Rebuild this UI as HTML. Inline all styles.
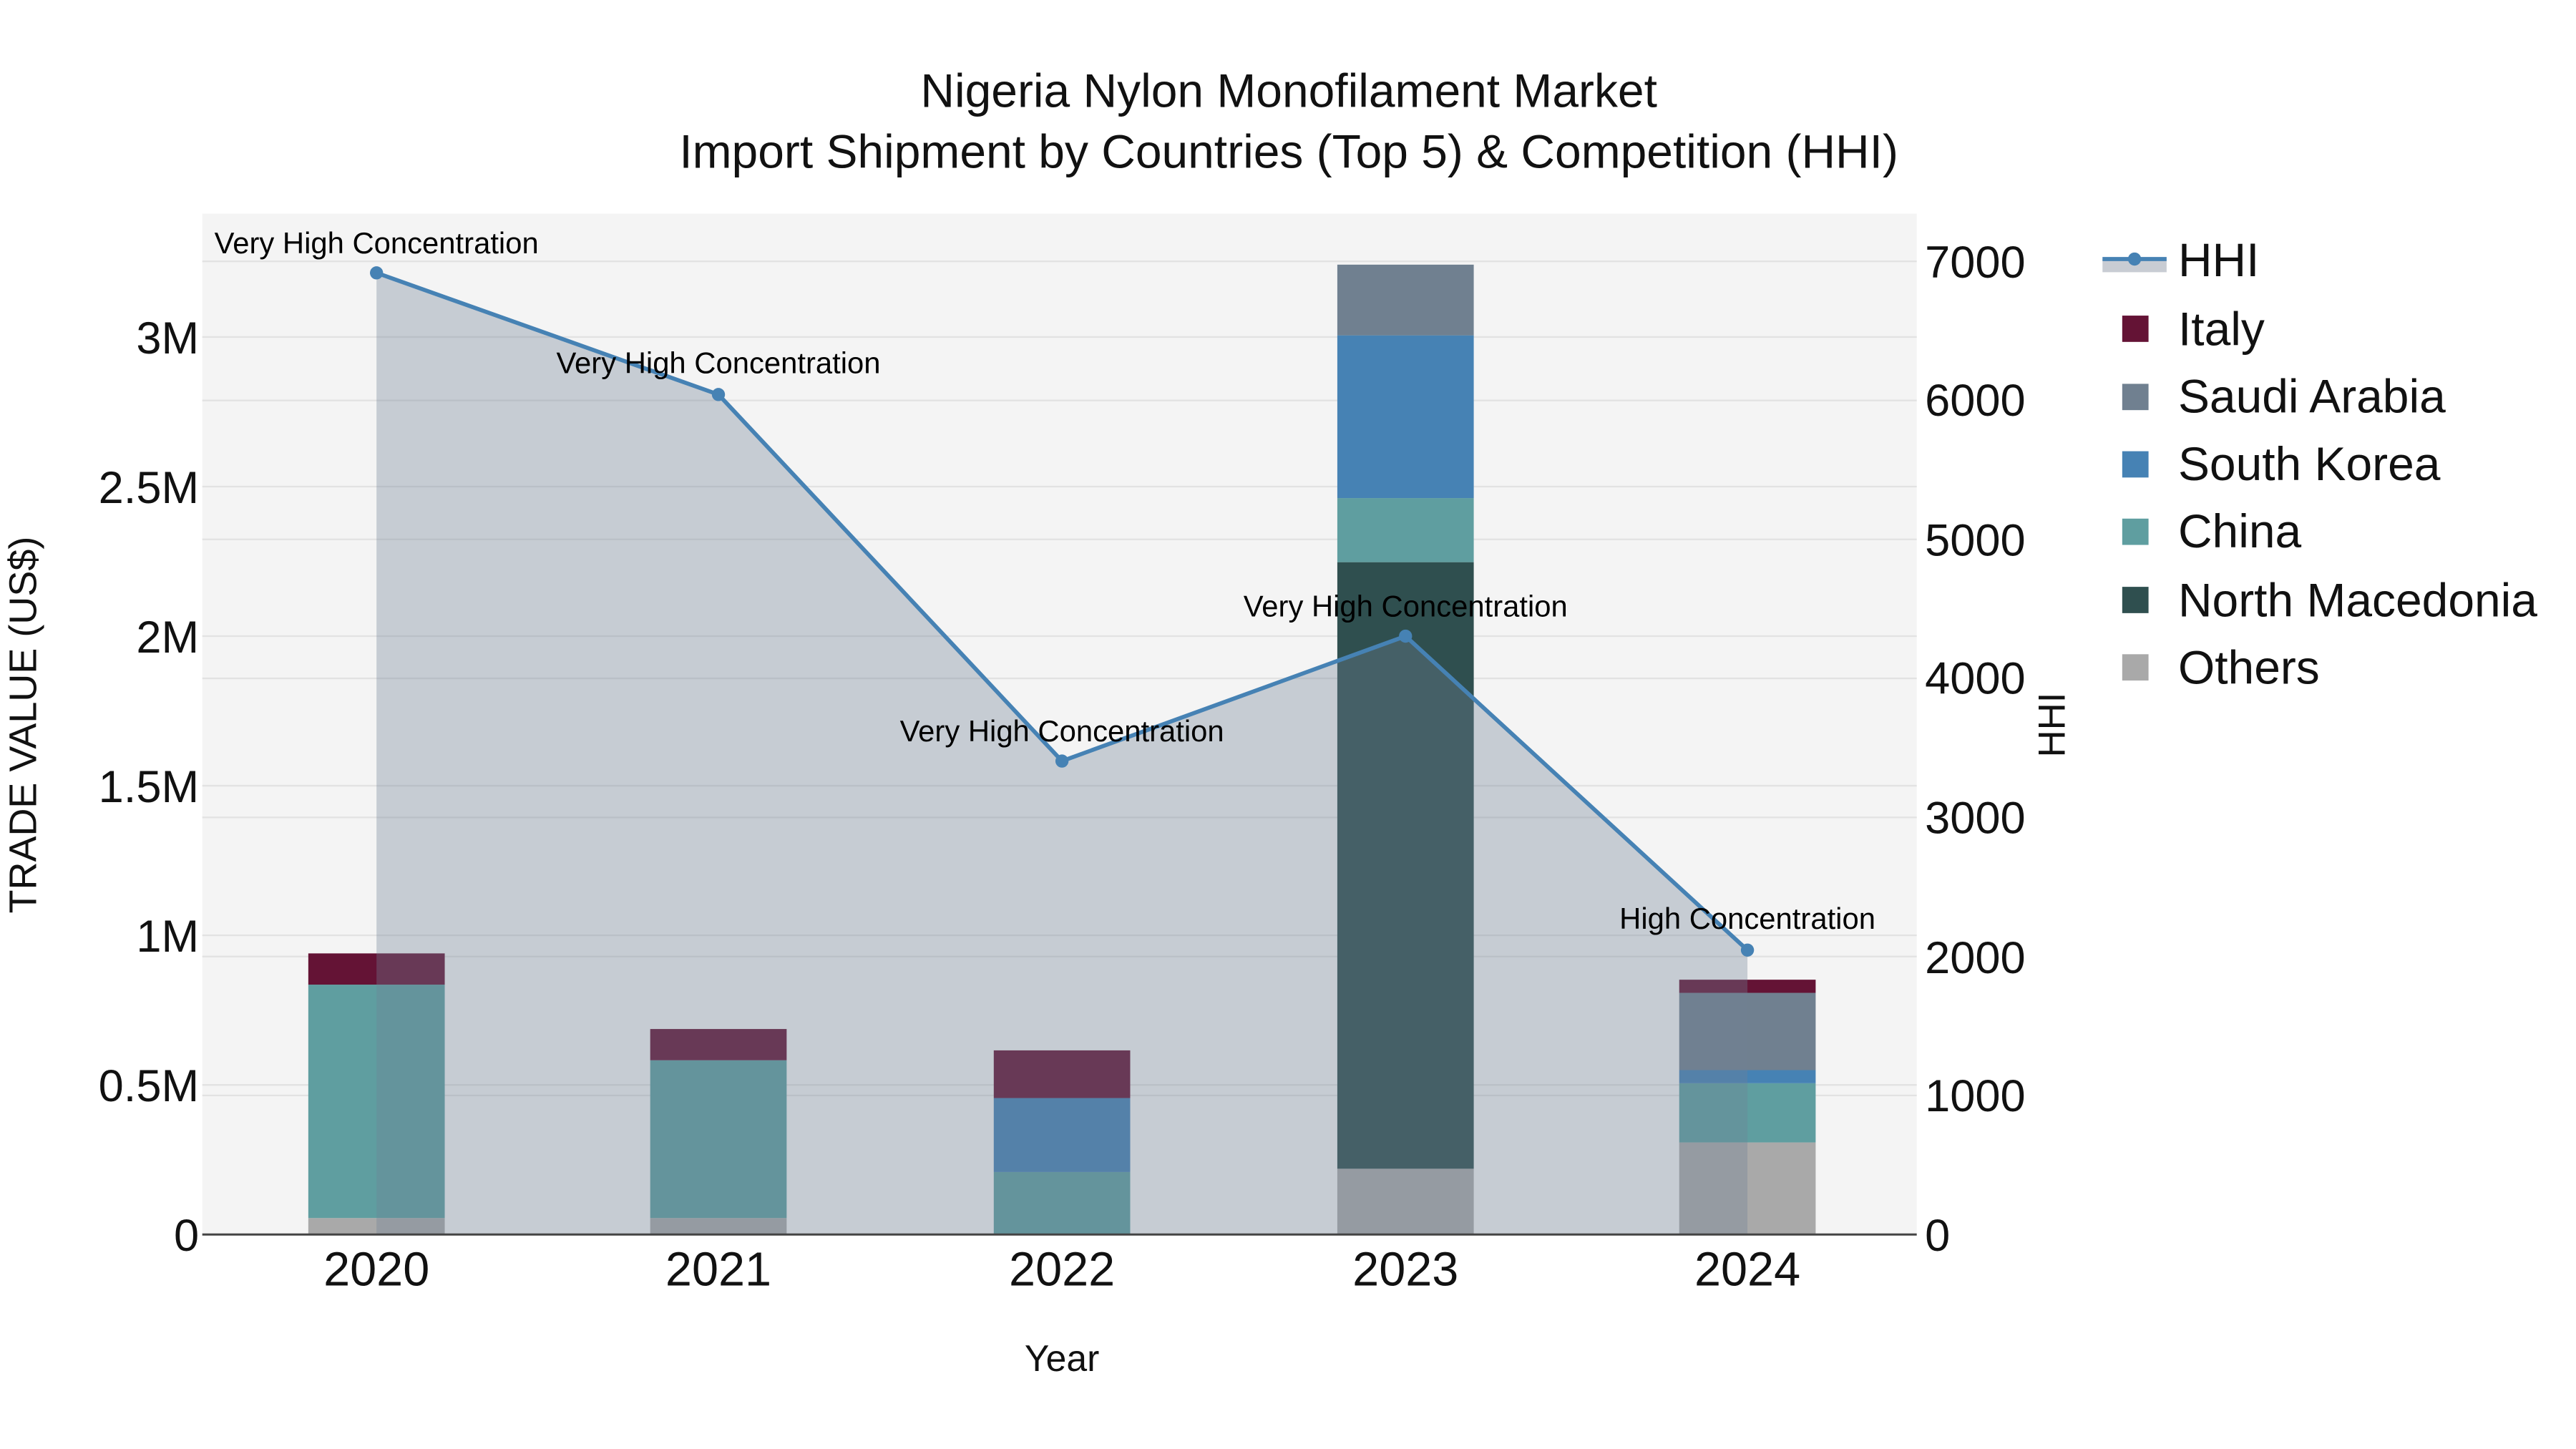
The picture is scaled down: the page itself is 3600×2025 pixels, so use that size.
<!DOCTYPE html>
<html><head><meta charset="utf-8"><style>html,body{margin:0;padding:0;background:#fff;}svg{display:block;}</style></head>
<body>
<svg width="3600" height="2025" viewBox="0 0 1567 881.5" xmlns="http://www.w3.org/2000/svg" font-family="Liberation Sans, Arial, sans-serif">
<rect x="0" y="0" width="1567" height="881.5" fill="#fff"/>
<rect x="123" y="130" width="1043" height="621" fill="#f4f4f4"/>
<g stroke="#e2e2e2" stroke-width="1">
<line x1="123" x2="1166" y1="660" y2="660"/><line x1="123" x2="1166" y1="569" y2="569"/><line x1="123" x2="1166" y1="478" y2="478"/><line x1="123" x2="1166" y1="387" y2="387"/><line x1="123" x2="1166" y1="296" y2="296"/><line x1="123" x2="1166" y1="205" y2="205"/>
<line x1="123" x2="1166" y1="666.4" y2="666.4"/><line x1="123" x2="1166" y1="581.9" y2="581.9"/><line x1="123" x2="1166" y1="497.3" y2="497.3"/><line x1="123" x2="1166" y1="412.7" y2="412.7"/><line x1="123" x2="1166" y1="328.1" y2="328.1"/><line x1="123" x2="1166" y1="243.6" y2="243.6"/><line x1="123" x2="1166" y1="159" y2="159"/>
</g>
<g>
<rect x="187.5" y="741" width="83" height="10" fill="#a9a9a9"/>
<rect x="187.5" y="599" width="83" height="142" fill="#5f9ea0"/>
<rect x="187.5" y="580" width="83" height="19" fill="#641335"/>
<rect x="395.5" y="741" width="83" height="10" fill="#a9a9a9"/>
<rect x="395.5" y="645" width="83" height="96" fill="#5f9ea0"/>
<rect x="395.5" y="626" width="83" height="19" fill="#641335"/>
<rect x="604.5" y="713" width="83" height="38" fill="#5f9ea0"/>
<rect x="604.5" y="668" width="83" height="45" fill="#4682b4"/>
<rect x="604.5" y="639" width="83" height="29" fill="#641335"/>
<rect x="813.5" y="711" width="83" height="40" fill="#a9a9a9"/>
<rect x="813.5" y="342" width="83" height="369" fill="#2f4f4f"/>
<rect x="813.5" y="303" width="83" height="39" fill="#5f9ea0"/>
<rect x="813.5" y="204" width="83" height="99" fill="#4682b4"/>
<rect x="813.5" y="161" width="83" height="43" fill="#708090"/>
<rect x="1021.5" y="695" width="83" height="56" fill="#a9a9a9"/>
<rect x="1021.5" y="659" width="83" height="36" fill="#5f9ea0"/>
<rect x="1021.5" y="651" width="83" height="8" fill="#4682b4"/>
<rect x="1021.5" y="604" width="83" height="47" fill="#708090"/>
<rect x="1021.5" y="596" width="83" height="8" fill="#641335"/>
</g>
<polygon points="229,166 437,240 646,463 855,387 1063,578 1063,751 229,751" fill="rgba(112,128,150,0.35)"/>
<line x1="123" x2="1166" y1="751" y2="751" stroke="#444" stroke-width="1.3"/>
<polyline points="229,166 437,240 646,463 855,387 1063,578" fill="none" stroke="#4682b4" stroke-width="2.5"/>
<g fill="#4682b4"><circle cx="229" cy="166" r="4"/><circle cx="437" cy="240" r="4"/><circle cx="646" cy="463" r="4"/><circle cx="855" cy="387" r="4"/><circle cx="1063" cy="578" r="4"/></g>
<g font-size="18.2" fill="#000" text-anchor="middle">
<text x="229" y="154">Very High Concentration</text>
<text x="437" y="227">Very High Concentration</text>
<text x="646" y="451">Very High Concentration</text>
<text x="855" y="375">Very High Concentration</text>
<text x="1063" y="565">High Concentration</text>
</g>
<g font-size="28.7" fill="#111" text-anchor="middle">
<text x="784" y="65">Nigeria Nylon Monofilament Market</text>
<text x="784" y="102">Import Shipment by Countries (Top 5) &amp; Competition (HHI)</text>
</g>
<g font-size="27.5" fill="#111" text-anchor="end">
<text x="121" y="761">0</text><text x="121" y="670">0.5M</text><text x="121" y="579">1M</text><text x="121" y="488">1.5M</text><text x="121" y="397">2M</text><text x="121" y="306">2.5M</text><text x="121" y="215">3M</text>
</g>
<g font-size="27.5" fill="#111">
<text x="1171" y="761">0</text><text x="1171" y="676">1000</text><text x="1171" y="592">2000</text><text x="1171" y="507">3000</text><text x="1171" y="422">4000</text><text x="1171" y="338">5000</text><text x="1171" y="253">6000</text><text x="1171" y="169">7000</text>
</g>
<g font-size="29" fill="#111" text-anchor="middle">
<text x="229" y="782">2020</text><text x="437" y="782">2021</text><text x="646" y="782">2022</text><text x="855" y="782">2023</text><text x="1063" y="782">2024</text>
</g>
<text x="646" y="834" font-size="22.5" fill="#111" text-anchor="middle">Year</text>
<text transform="translate(22,441) rotate(-90)" font-size="23.5" fill="#111" text-anchor="middle">TRADE VALUE (US$)</text>
<text transform="translate(1256,441) rotate(-90)" font-size="23" fill="#111" text-anchor="middle">HHI</text>
<rect x="1279" y="157.6" width="39" height="8" fill="#c8ccd3"/>
<line x1="1279" x2="1318" y1="157.6" y2="157.6" stroke="#4682b4" stroke-width="2.5"/>
<circle cx="1298.5" cy="157.6" r="4" fill="#4682b4"/>
<rect x="1291" y="192" width="16" height="16" fill="#641335"/>
<rect x="1291" y="233.5" width="16" height="16" fill="#708090"/>
<rect x="1291" y="274.5" width="16" height="16" fill="#4682b4"/>
<rect x="1291" y="315.5" width="16" height="16" fill="#5f9ea0"/>
<rect x="1291" y="357" width="16" height="16" fill="#2f4f4f"/>
<rect x="1291" y="398" width="16" height="16" fill="#a9a9a9"/>
<g font-size="28.7" fill="#111">
<text x="1325" y="168">HHI</text>
<text x="1325" y="210">Italy</text>
<text x="1325" y="251">Saudi Arabia</text>
<text x="1325" y="292">South Korea</text>
<text x="1325" y="333">China</text>
<text x="1325" y="375">North Macedonia</text>
<text x="1325" y="416">Others</text>
</g>
</svg>
</body></html>
